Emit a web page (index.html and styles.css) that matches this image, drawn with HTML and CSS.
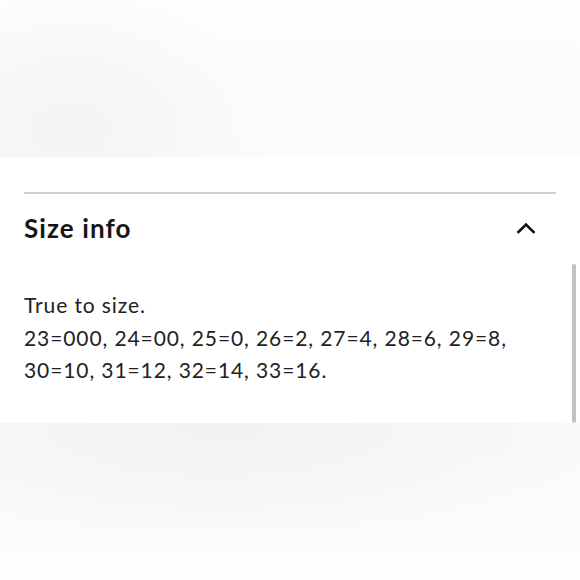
FILE: index.html
```html
<!DOCTYPE html>
<html>
<head>
<meta charset="utf-8">
<link rel="stylesheet" href="styles.css">
</head>
<body>
<div class="top-fade"></div>
<section class="panel">
  <div class="divider"></div>
  <div class="header">
    <h2 class="title">Size info</h2>
    <svg class="chevron" width="20" height="12" viewBox="0 0 20 12"><path d="M2.5 10 L10 2.5 L17.5 10" fill="none" stroke="#111" stroke-width="2.6" stroke-linecap="square"/></svg>
  </div>
  <div class="body">
    <p class="line">True to size.</p>
    <p class="line">23=000, 24=00, 25=0, 26=2, 27=4, 28=6, 29=8,</p>
    <p class="line">30=10, 31=12, 32=14, 33=16.</p>
  </div>
  <div class="scrollbar"></div>
</section>
<div class="bottom-fade"></div>
</body>
</html>
```

FILE: styles.css
```css
html, body {
  margin: 0;
  padding: 0;
  background: #fff;
}
body {
  width: 580px;
  height: 580px;
  overflow: hidden;
  font-family: Lato, "Noto Sans", sans-serif;
  color: #1e1e1e;
}
.top-fade {
  height: 157px;
  background:
    radial-gradient(ellipse 200px 140px at 70px 130px, #f4f4f4 0%, #f7f7f7 45%, rgba(250,250,250,0) 100%),
    linear-gradient(#fdfdfd, #fbfbfb);
}
.panel {
  position: relative;
  background: #fff;
  padding: 35px 24px 36px;
}
.divider {
  height: 2px;
  background: #cfcfcf;
}
.header {
  display: flex;
  align-items: center;
  justify-content: space-between;
  height: 68px;
}
.title {
  margin: 0;
  font-size: 26px;
  font-weight: 700;
  letter-spacing: 1.1px;
  color: #161616;
}
.chevron {
  margin-right: 20px;
}
.body {
  margin-top: 27px;
}
.line {
  margin: 0;
  font-size: 21px;
  line-height: 32.5px;
  letter-spacing: 0.9px;
  color: #222;
}
.scrollbar {
  position: absolute;
  right: 4px;
  top: 107px;
  bottom: 0;
  width: 4px;
  border-radius: 2px;
  background: #c2c2c2;
}
.bottom-fade {
  height: 160px;
  background:
    radial-gradient(ellipse 420px 130px at 220px 0px, #f2f2f2 0%, #f6f6f6 50%, rgba(252,252,252,0) 100%),
    linear-gradient(#fafafa, #fdfdfd);
}
```
